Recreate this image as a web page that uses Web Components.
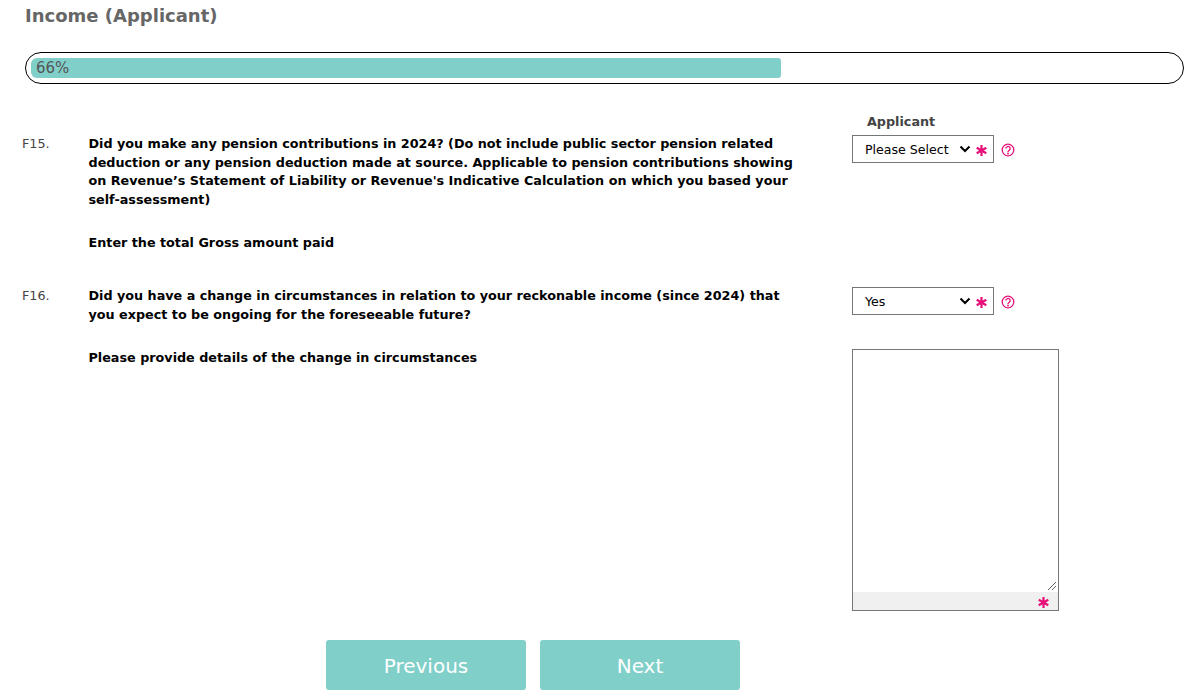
<!DOCTYPE html>
<html><head><meta charset="utf-8"><style>
html,body{margin:0;background:#fff;overflow:hidden}
body{font-family:"DejaVu Sans",Verdana,sans-serif;height:695px}
</style></head><body>
<template id="t-bar"><style>
:host{display:block;height:32px;margin:0 6px 0 25px;border:1px solid #000;border-radius:16px;box-sizing:border-box;padding:5px 5px;background:#fff}
.f{height:20px;width:750px;background:#80cfc9;border-radius:6px 3px 3px 6px;color:#555;font-size:15px;line-height:21px;padding-left:5px;box-sizing:border-box}
</style><div class="f"><slot></slot></div></template>
<template id="t-field"><style>
:host{display:flex;align-items:center;height:28px}
.s{box-sizing:border-box;width:142px;height:28px;border:1px solid #767676;display:flex;align-items:center;padding-left:12px;padding-right:3px;font:12.6px "DejaVu Sans",sans-serif;color:#000;background:#fff}
.t{flex:1}
svg{display:block;flex:none}
</style><div class="s"><span class="t"><slot></slot></span><svg width="12" height="8" viewBox="0 0 12 8" style="margin-right:1px"><path d="M1.500 1.500 6 6l4.500-4.500" fill="none" stroke="#000" stroke-width="2"/></svg></div>
<svg width="14" height="14" viewBox="0 0 14 14" style="margin:2px 0 0 7px"><circle cx="7" cy="7" r="5.800" fill="none" stroke="#e8107a" stroke-width="1.300"/><path d="M4.800 5.600a2.200 2.100 0 1 1 3.300 1.800c-.8.400-1.100.7-1.100 1.500" fill="none" stroke="#e8107a" stroke-width="1.300"/><circle cx="7" cy="10.500" r=".9" fill="#e8107a"/></svg>
</template>
<template id="t-star"><style>
:host{display:block;line-height:0;padding-top:2px}
</style><svg width="11" height="11" viewBox="0 0 11 11"><path d="M5.500 0v11M.7 2.700l9.600 5.600M10.300 2.700.7 8.300" stroke="#e8107a" stroke-width="2.200" fill="none"/></svg></template>
<template id="t-q"><style>
:host{display:grid;grid-template-columns:88.500px 710px;font-size:12.750px;line-height:18.700px;color:#000}
.n{color:#444;padding-left:22px;box-sizing:border-box}
.b{font-weight:bold}
</style><div class="n"><slot name="n"></slot></div><div class="b"><slot></slot></div></template>
<template id="t-btn"><style>
:host{display:block;width:200px;height:50px;background:#80cfc9;border-radius:3px;color:#fff;font-size:20px;line-height:52px;text-align:center}
</style><slot></slot></template>
<template id="t-page"><style>
:host{display:block;position:relative;height:695px}
h1{margin:0;padding:6px 0 0 25px;font-size:18px;line-height:20px;color:#666;font-weight:bold;box-sizing:border-box;height:52px}
.main{display:grid;grid-template-columns:852px 1fr;margin-top:20px}
.right{padding-top:8px}
.app{font-size:12.750px;font-weight:bold;color:#444;padding-left:15px;height:23px;line-height:20px}
.left{padding-top:31px}
.sub{margin-left:88.500px;font-size:12.750px;font-weight:bold;line-height:18.700px}
.ta{width:207px;height:262px;box-sizing:border-box;border:1px solid #767676;margin-top:34px;display:flex;flex-direction:column}
.ta .in{flex:1;position:relative}
.ta .bar{height:18px;background:#f0f0f0;display:flex;justify-content:flex-end;align-items:center;padding-right:9px}
.grip{position:absolute;right:1px;bottom:1px}
.btns{display:flex;justify-content:center;gap:14px;position:absolute;left:326px;top:640px}
</style>
<h1><slot name="title"></slot></h1>
<slot name="bar"></slot>
<div class="main"><div class="left">
<slot name="q1"></slot><div style="height:24.500px"></div>
<div class="sub">Enter the total Gross amount paid</div>
<div style="height:34px"></div>
<slot name="q2"></slot><div style="height:25px"></div>
<div class="sub">Please provide details of the change in circumstances</div>
</div><div class="right">
<div class="app">Applicant</div>
<slot name="f1"></slot>
<div style="height:124px"></div>
<slot name="f2"></slot>
<div class="ta"><div class="in"><svg class="grip" width="10" height="10" viewBox="0 0 10 10"><path d="M1 9 9 1M5 9 9 5" stroke="#666" stroke-width="1" fill="none"/></svg></div><div class="bar"><slot name="star"></slot></div></div>
</div></div>
<div class="btns"><slot name="btns"></slot></div>
</template>
<income-page>
<span slot="title">Income (Applicant)</span>
<progress-bar slot="bar">66%</progress-bar>
<q-row slot="q1"><span slot="n">F15.</span>Did you make any pension contributions in 2024? (Do not include public sector pension related deduction or any pension deduction made at source. Applicable to pension contributions showing on Revenue’s Statement of Liability or Revenue's Indicative Calculation on which you based your self-assessment)</q-row>
<q-row slot="q2"><span slot="n">F16.</span>Did you have a change in circumstances in relation to your reckonable income (since 2024) that you expect to be ongoing for the foreseeable future?</q-row>
<select-field slot="f1">Please Select</select-field>
<select-field slot="f2">Yes</select-field>
<req-star slot="star"></req-star>
<div slot="btns" style="display:flex;gap:14px"><app-btn>Previous</app-btn><app-btn>Next</app-btn></div>
</income-page>
<script>
function def(tag,id){customElements.define(tag,class extends HTMLElement{constructor(){super();this.attachShadow({mode:'open'}).appendChild(document.getElementById(id).content.cloneNode(true));}});}
def('progress-bar','t-bar');def('q-row','t-q');def('app-btn','t-btn');def('req-star','t-star');def('income-page','t-page');
customElements.define('select-field',class extends HTMLElement{constructor(){super();const r=this.attachShadow({mode:'open'});r.appendChild(document.getElementById('t-field').content.cloneNode(true));
const s=document.getElementById('t-star').content.querySelector('svg').cloneNode(true);s.setAttribute('style','margin:2px 3px 0 4px');r.querySelector('.s').appendChild(s);}});
</script>
</body></html>
